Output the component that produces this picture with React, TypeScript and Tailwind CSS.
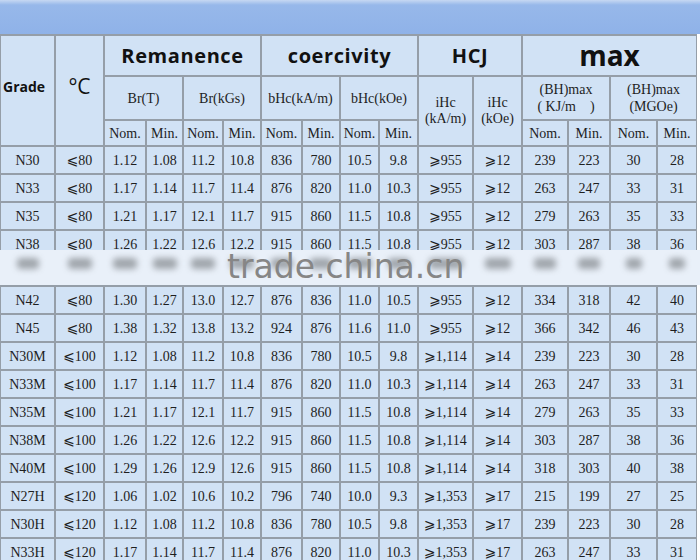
import React from "react";

const COLS =
  "grid-cols-[53px_47px_40px_35px_38px_36px_39px_36px_37px_37px_53px_47px_44px_40px_45px_38px]";

const data: string[][] = [
  ["N30", "⩽80", "1.12", "1.08", "11.2", "10.8", "836", "780", "10.5", "9.8", "⩾955", "⩾12", "239", "223", "30", "28"],
  ["N33", "⩽80", "1.17", "1.14", "11.7", "11.4", "876", "820", "11.0", "10.3", "⩾955", "⩾12", "263", "247", "33", "31"],
  ["N35", "⩽80", "1.21", "1.17", "12.1", "11.7", "915", "860", "11.5", "10.8", "⩾955", "⩾12", "279", "263", "35", "33"],
  ["N38", "⩽80", "1.26", "1.22", "12.6", "12.2", "915", "860", "11.5", "10.8", "⩾955", "⩾12", "303", "287", "38", "36"],
  ["", "", "", "", "", "", "", "", "", "", "", "", "", "", "", ""],
  ["N42", "⩽80", "1.30", "1.27", "13.0", "12.7", "876", "836", "11.0", "10.5", "⩾955", "⩾12", "334", "318", "42", "40"],
  ["N45", "⩽80", "1.38", "1.32", "13.8", "13.2", "924", "876", "11.6", "11.0", "⩾955", "⩾12", "366", "342", "46", "43"],
  ["N30M", "⩽100", "1.12", "1.08", "11.2", "10.8", "836", "780", "10.5", "9.8", "⩾1,114", "⩾14", "239", "223", "30", "28"],
  ["N33M", "⩽100", "1.17", "1.14", "11.7", "11.4", "876", "820", "11.0", "10.3", "⩾1,114", "⩾14", "263", "247", "33", "31"],
  ["N35M", "⩽100", "1.21", "1.17", "12.1", "11.7", "915", "860", "11.5", "10.8", "⩾1,114", "⩾14", "279", "263", "35", "33"],
  ["N38M", "⩽100", "1.26", "1.22", "12.6", "12.2", "915", "860", "11.5", "10.8", "⩾1,114", "⩾14", "303", "287", "38", "36"],
  ["N40M", "⩽100", "1.29", "1.26", "12.9", "12.6", "915", "860", "11.5", "10.8", "⩾1,114", "⩾14", "318", "303", "40", "38"],
  ["N27H", "⩽120", "1.06", "1.02", "10.6", "10.2", "796", "740", "10.0", "9.3", "⩾1,353", "⩾17", "215", "199", "27", "25"],
  ["N30H", "⩽120", "1.12", "1.08", "11.2", "10.8", "836", "780", "10.5", "9.8", "⩾1,353", "⩾17", "239", "223", "30", "28"],
  ["N33H", "⩽120", "1.17", "1.14", "11.7", "11.4", "876", "820", "11.0", "10.3", "⩾1,353", "⩾17", "263", "247", "33", "31"],
];

const cell = "bg-[#d1e2f5] flex items-center justify-center text-center";
const serif = "font-['Liberation_Serif','DejaVu_Serif','DejaVu_Sans',serif] text-[14px] text-[#1e1e1e]";
const sans = "font-['Open_Sans','Noto_Sans',sans-serif] font-bold text-[#111]";

// approximate width of blurred smudges per column (px)
const smudge = [22, 24, 24, 24, 24, 24, 22, 22, 24, 22, 34, 26, 22, 22, 16, 16];

export default function App() {
  return (
    <div className="relative w-[700px] h-[560px] overflow-hidden bg-white">
      <div className="h-[34px] w-[700px] bg-[linear-gradient(to_bottom,#c6d8f2_0px,#97b8ea_5px,#8fb2e8_100%)]" />
      <div
        className={`grid ${COLS} grid-rows-[39px_42px_24px] auto-rows-[26px] gap-[2px] pt-[2px] pl-[1px] pr-[1px] w-[697px] bg-[#959ea8]`}
      >
        <div className={`${cell} col-start-1 row-start-1 row-span-3 justify-start pl-[2px] pb-[9px] ${sans} text-[14px]`}>
          Grade
        </div>
        <div className={`${cell} col-start-2 row-start-1 row-span-3 pb-[7px] font-['Open_Sans','Noto_Sans',sans-serif] text-[21px] text-[#111]`}>
          °C
        </div>
        <div className={`${cell} col-start-3 col-span-4 row-start-1 ${sans} text-[20px] tracking-[0.6px]`}>Remanence</div>
        <div className={`${cell} col-start-7 col-span-4 row-start-1 ${sans} text-[20px] tracking-[0.6px]`}>coercivity</div>
        <div className={`${cell} col-start-11 col-span-2 row-start-1 ${sans} text-[20px] tracking-[0.6px]`}>HCJ</div>
        <div className={`${cell} col-start-13 col-span-4 row-start-1 ${sans} text-[28px] pb-[2px]`}>max</div>

        <div className={`${cell} col-start-3 col-span-2 row-start-2 ${serif}`}>Br(T)</div>
        <div className={`${cell} col-start-5 col-span-2 row-start-2 ${serif}`}>Br(kGs)</div>
        <div className={`${cell} col-start-7 col-span-2 row-start-2 ${serif}`}>bHc(kA/m)</div>
        <div className={`${cell} col-start-9 col-span-2 row-start-2 ${serif}`}>bHc(kOe)</div>
        <div className={`${cell} col-start-11 row-start-2 row-span-2 flex-col leading-[16px] ${serif}`}>
          <span>iHc</span>
          <span>(kA/m)</span>
        </div>
        <div className={`${cell} col-start-12 row-start-2 row-span-2 flex-col leading-[16px] ${serif}`}>
          <span>iHc</span>
          <span>(kOe)</span>
        </div>
        <div className={`${cell} col-start-13 col-span-2 row-start-2 flex-col leading-[17px] ${serif}`}>
          <span>(BH)max</span>
          <span className="whitespace-pre">{"( KJ/m    )"}</span>
        </div>
        <div className={`${cell} col-start-15 col-span-2 row-start-2 flex-col leading-[17px] ${serif}`}>
          <span>(BH)max</span>
          <span>(MGOe)</span>
        </div>

        {[3, 5, 7, 9, 13, 15].map((c) => (
          <React.Fragment key={c}>
            <div className={`${cell} row-start-3 ${serif}`} style={{ gridColumnStart: c }}>
              Nom.
            </div>
            <div className={`${cell} row-start-3 ${serif}`} style={{ gridColumnStart: c + 1 }}>
              Min.
            </div>
          </React.Fragment>
        ))}

        {data.map((row, r) =>
          row.map((v, i) => (
            <div key={`${r}-${i}`} className={`${cell} ${serif}`}>
              {v}
            </div>
          ))
        )}
      </div>

      {/* watermark band */}
      <div className="absolute left-0 top-[250px] w-[700px] h-[35px] overflow-hidden bg-[#e9f0f9]">
        <div className={`absolute left-0 top-[5px] grid ${COLS} gap-x-[2px] pl-[1px] h-[16px]`}>
          {smudge.map((w, i) => (
            <div key={i} className="flex items-center justify-center">
              <div
                className="h-[11px] bg-[#6f7478] opacity-60 blur-[3px] rounded-sm"
                style={{ width: `${w}px` }}
              />
            </div>
          ))}
        </div>
        <div className="absolute left-[227px] top-0 leading-[34px] text-[33px] text-[#868686] font-['DejaVu_Sans',sans-serif] whitespace-nowrap">
          trade.china.cn
        </div>
      </div>
    </div>
  );
}
